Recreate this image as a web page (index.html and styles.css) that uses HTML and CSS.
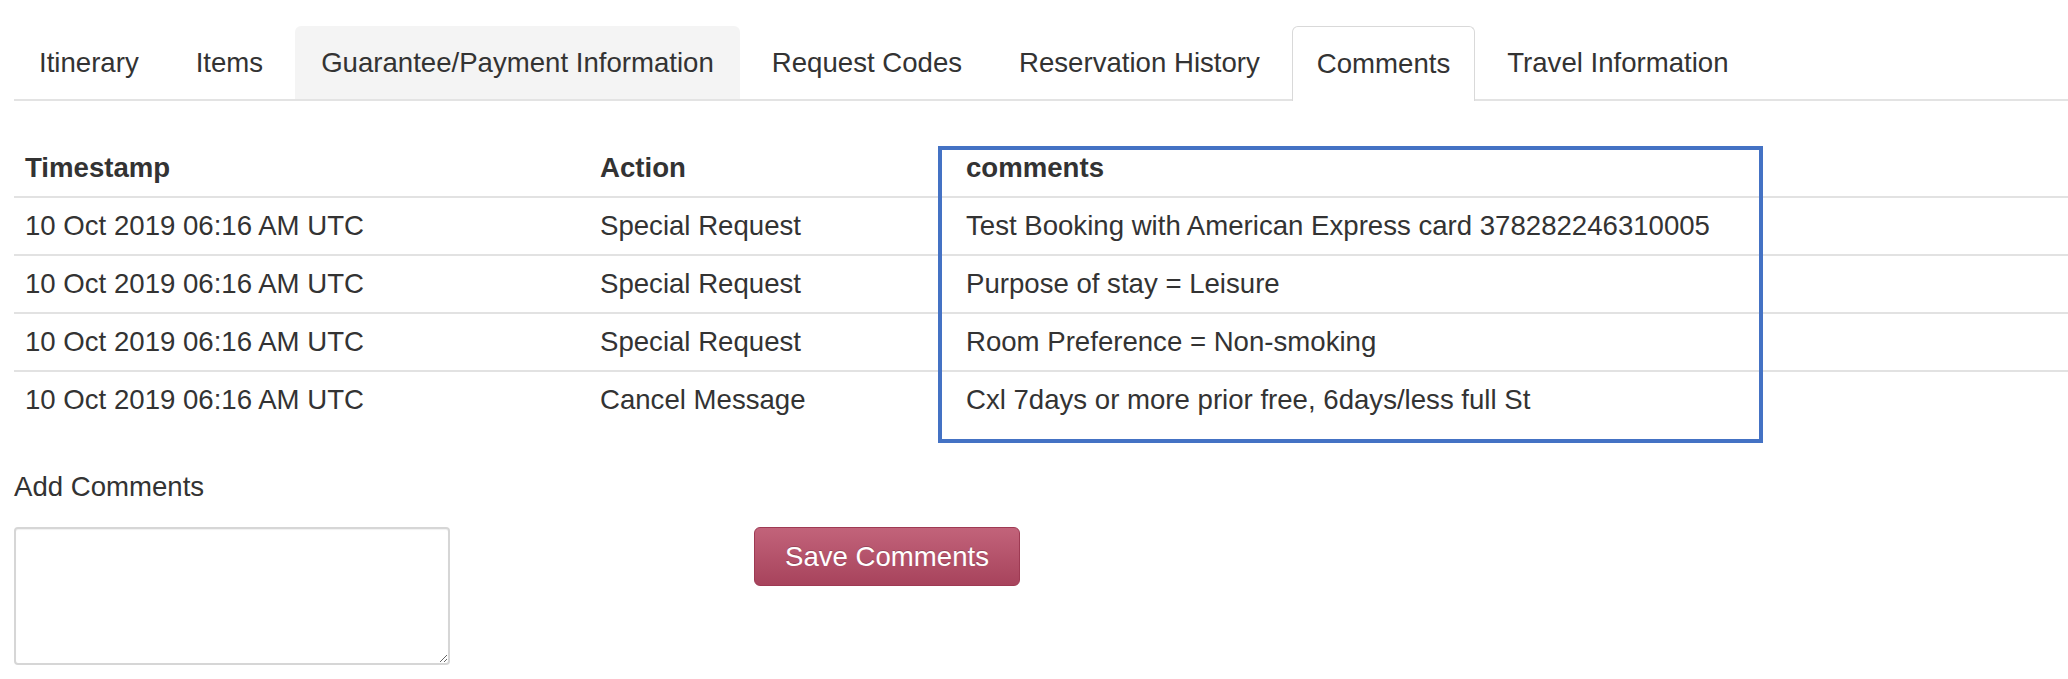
FILE: index.html
```html
<!DOCTYPE html>
<html lang="en">
<head>
<meta charset="utf-8">
<title>Comments</title>
<link rel="stylesheet" href="styles.css">
</head>
<body>
<div class="page">
  <ul class="tabs">
    <li class="tab">Itinerary</li>
    <li class="tab">Items</li>
    <li class="tab tab-hover">Guarantee/Payment Information</li>
    <li class="tab">Request Codes</li>
    <li class="tab">Reservation History</li>
    <li class="tab tab-active">Comments</li>
    <li class="tab">Travel Information</li>
  </ul>

  <div class="table-wrap">
    <table class="grid">
      <colgroup>
        <col class="col-ts">
        <col class="col-action">
        <col>
      </colgroup>
      <thead>
        <tr><th>Timestamp</th><th>Action</th><th>comments</th></tr>
      </thead>
      <tbody>
        <tr><td>10 Oct 2019 06:16 AM UTC</td><td>Special Request</td><td>Test Booking with American Express card 378282246310005</td></tr>
        <tr><td>10 Oct 2019 06:16 AM UTC</td><td>Special Request</td><td>Purpose of stay = Leisure</td></tr>
        <tr><td>10 Oct 2019 06:16 AM UTC</td><td>Special Request</td><td>Room Preference = Non-smoking</td></tr>
        <tr><td>10 Oct 2019 06:16 AM UTC</td><td>Cancel Message</td><td>Cxl 7days or more prior free, 6days/less full St</td></tr>
      </tbody>
    </table>
    <div class="highlight"></div>
  </div>

  <label class="add-label" for="comment-box">Add Comments</label>
  <div class="form-row">
    <textarea id="comment-box" class="comment-box"></textarea>
    <button class="save-btn" type="button">Save Comments</button>
  </div>
</div>
</body>
</html>
```

FILE: styles.css
```css
html, body {
  margin: 0;
  padding: 0;
  background: #ffffff;
}

body {
  font-family: "Liberation Sans", Arial, sans-serif;
  font-size: 27.6px;
  color: #333333;
}

.page {
  padding-left: 14px;
}

/* Tabs */
.tabs {
  display: flex;
  align-items: flex-start;
  list-style: none;
  margin: 26px 0 0;
  padding: 0;
  border-bottom: 2px solid #e3e3e3;
}

.tab {
  height: 73px;
  display: flex;
  align-items: center;
  padding: 0 24px;
  margin-right: 7px;
  border: 1px solid transparent;
  border-bottom: none;
  border-radius: 6px 6px 0 0;
  box-sizing: border-box;
  white-space: nowrap;
  color: #333333;
}

.tab-hover {
  background: #f4f4f4;
  padding: 0 25px;
}

.tab-active {
  height: 75px;
  margin-bottom: -2px;
  background: #ffffff;
  border-color: #d9d9d9;
}

/* Table */
.table-wrap {
  position: relative;
  margin-top: 39px;
}

.grid {
  width: 100%;
  table-layout: fixed;
  border-collapse: collapse;
  border-spacing: 0;
}

.col-ts {
  width: 575px;
}

.col-action {
  width: 366px;
}

.grid th,
.grid td {
  text-align: left;
  padding: 0 11px;
  height: 56px;
  vertical-align: middle;
  white-space: nowrap;
}

.grid th {
  font-weight: bold;
  border-bottom: 2px solid #e2e2e2;
}

.grid tbody tr + tr td {
  border-top: 2px solid #e2e2e2;
}

.highlight {
  position: absolute;
  left: 924px;
  top: 6px;
  width: 825px;
  height: 297px;
  box-sizing: border-box;
  border: 4px solid #4472c4;
  pointer-events: none;
}

/* Form */
.add-label {
  display: block;
  line-height: 40px;
  margin: 39px 0 20px;
}

.form-row {
  display: flex;
  align-items: flex-start;
}

.comment-box {
  width: 436px;
  height: 138px;
  box-sizing: border-box;
  border: 2px solid #d6d6d6;
  border-radius: 4px;
  box-shadow: inset 0 1px 1px rgba(0, 0, 0, 0.06);
  font-family: inherit;
  font-size: 20px;
  margin: 0;
}

.save-btn {
  margin-left: 304px;
  margin-top: 0;
  width: 266px;
  height: 59px;
  box-sizing: border-box;
  border: 1px solid #9e3a53;
  border-radius: 6px;
  background: linear-gradient(to bottom, #c2637a 0%, #a7435c 100%);
  color: #ffffff;
  font-family: inherit;
  font-size: 27.6px;
  text-shadow: 0 -1px 0 rgba(0, 0, 0, 0.2);
  padding: 0;
  cursor: pointer;
}
```
